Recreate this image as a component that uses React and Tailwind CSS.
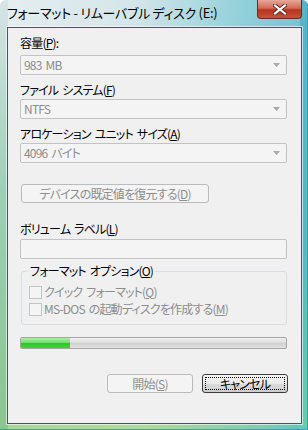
import React from "react";

const font = { fontFamily: '"Noto Sans CJK JP", "Noto Sans", sans-serif' };

function U({ children }) {
  return <span className="underline underline-offset-[1px]">{children}</span>;
}

function Combo({ value }) {
  return (
    <div className="flex h-[20px] w-[267px] items-center justify-between rounded-[2px] border border-[#c3c3c3] bg-[#f4f4f4] pl-[3px] pr-[6px]">
      <span className="text-[12px] leading-[14px] text-[#8d8d8d]">{value}</span>
      <svg width="7" height="4" viewBox="0 0 7 4">
        <path d="M0 0h7L3.5 4z" fill="#a8a8a8" />
      </svg>
    </div>
  );
}

function Check({ children }) {
  return (
    <div className="flex items-center gap-[2px]">
      <div className="h-[13px] w-[13px] border border-[#c4c4c4] bg-[#f4f4f4]" />
      <span className="text-[12px] leading-[14px] text-[#8d8d8d]">{children}</span>
    </div>
  );
}

export default function App() {
  return (
    <div
      style={font}
      className="relative h-[430px] w-[308px] overflow-hidden rounded-t-[6px] bg-[linear-gradient(100deg,#e6eef0_0%,#d4e6ea_35%,#8fcfd9_65%,#5bb5c6_100%)] [font-feature-settings:'palt']"
    >
      <div className="absolute inset-x-0 bottom-0 h-[200px] bg-[linear-gradient(90deg,#a6d488_0%,#b0dc90_45%,#7fd0b0_85%,#5cc4c0_100%)] opacity-90" />
      <div className="absolute inset-y-0 left-0 w-[8px] bg-[linear-gradient(180deg,#d6e4e6_0%,#9ccfb6_45%,#8bc58e_100%)]" />
      <div className="absolute inset-y-0 right-0 w-[8px] bg-[linear-gradient(180deg,#58b3c4_0%,#58b9c0_60%,#6ccab0_100%)]" />
      <div className="absolute inset-x-0 bottom-0 h-[1px] bg-[#2aa6d8]" />
      <div className="absolute inset-y-0 right-0 w-[1px] bg-[#2aa6d8]" />

      <div className="relative flex h-[27px] items-start justify-between">
        <div className="pl-[7px] pt-[5px] text-[13px] leading-[16px] tracking-[-0.3px] text-black">
          フォーマット - リムーバブル ディスク (E:)
        </div>
        <div className="mr-[6px] flex h-[19px] w-[45px] items-center justify-center rounded-b-[4px] border border-t-0 border-[#6b2a20] bg-[linear-gradient(180deg,#e7a89a_0%,#d16a55_45%,#b8341f_55%,#c9523a_100%)]">
          <svg width="14" height="11" viewBox="0 0 14 11">
            <path
              d="M2 1.5L12 9.5M12 1.5L2 9.5"
              stroke="#5a2620"
              strokeWidth="4"
              strokeLinecap="square"
            />
            <path
              d="M2 1.5L12 9.5M12 1.5L2 9.5"
              stroke="#ffffff"
              strokeWidth="2.2"
              strokeLinecap="square"
            />
          </svg>
        </div>
      </div>

      <div className="relative ml-[7px] h-[397px] w-[295px] border border-[#3c5a63] bg-[#f0f0f0] pl-[12px] text-[12px] leading-[14px] tracking-[-0.8px] text-black [word-spacing:2px] shadow-[0_0_0_1px_rgba(255,255,255,0.6)]">
        <div className="mt-[8px]">
          容量(<U>P</U>):
        </div>
        <div className="mt-[5px]">
          <Combo value="983 MB" />
        </div>
        <div className="mt-[8px]">
          ファイル システム(<U>F</U>)
        </div>
        <div className="mt-[2px]">
          <Combo value="NTFS" />
        </div>
        <div className="mt-[8px]">
          アロケーション ユニット サイズ(<U>A</U>)
        </div>
        <div className="mt-[2px]">
          <Combo value="4096 バイト" />
        </div>

        <div className="ml-[1px] mt-[21px] flex h-[19px] w-[188px] items-center justify-center rounded-[3px] border border-[#b9bcbf] bg-[#f4f4f4] text-[#8d8d8d]">
          デバイスの既定値を復元する(<U>D</U>)
        </div>

        <div className="mt-[19px]">
          ボリューム ラベル(<U>L</U>)
        </div>
        <div className="mt-[3px] h-[20px] w-[267px] rounded-[2px] border border-[#c3c3c3] bg-[#f4f4f4]" />

        <div className="relative mt-[12px] ml-[1px] h-[54px] w-[266px] rounded-[3px] border border-[#d5dfe5]">
          <div className="absolute -top-[8px] left-[6px] bg-[#f0f0f0] px-[2px]">
            フォーマット オプション(<U>O</U>)
          </div>
          <div className="flex flex-col gap-[3px] pl-[7px] pt-[13px]">
            <Check>
              クイック フォーマット(<U>Q</U>)
            </Check>
            <Check>
              MS-DOS の起動ディスクを作成する(<U>M</U>)
            </Check>
          </div>
        </div>

        <div className="mt-[12px] flex h-[12px] w-[267px] overflow-hidden rounded-[2px] border border-[#a5a5a5] bg-[linear-gradient(180deg,#f0f0f0_0%,#dcdcdc_50%,#cfcfcf_51%,#e2e2e2_100%)]">
          <div className="h-full w-[49px] bg-[linear-gradient(180deg,#a8f0a4_0%,#6ee36a_45%,#2ec62a_55%,#44d23e_100%)]" />
        </div>

        <div className="mt-[25px] flex justify-end gap-[9px] pr-[13px]">
          <div className="flex h-[19px] w-[86px] items-center justify-center rounded-[3px] border border-[#b9bcbf] bg-[#f4f4f4] text-[#8d8d8d]">
            開始(<U>S</U>)
          </div>
          <div className="flex h-[19px] w-[86px] items-center justify-center rounded-[3px] border border-[#3c3c3c] bg-[linear-gradient(180deg,#f6f6f6_0%,#e9e9e9_50%,#dcdcdc_51%,#cdcdcd_100%)] p-[2px]">
            <div className="flex h-full w-full items-center justify-center border border-dotted border-black">
              キャンセル
            </div>
          </div>
        </div>
      </div>
    </div>
  );
}
